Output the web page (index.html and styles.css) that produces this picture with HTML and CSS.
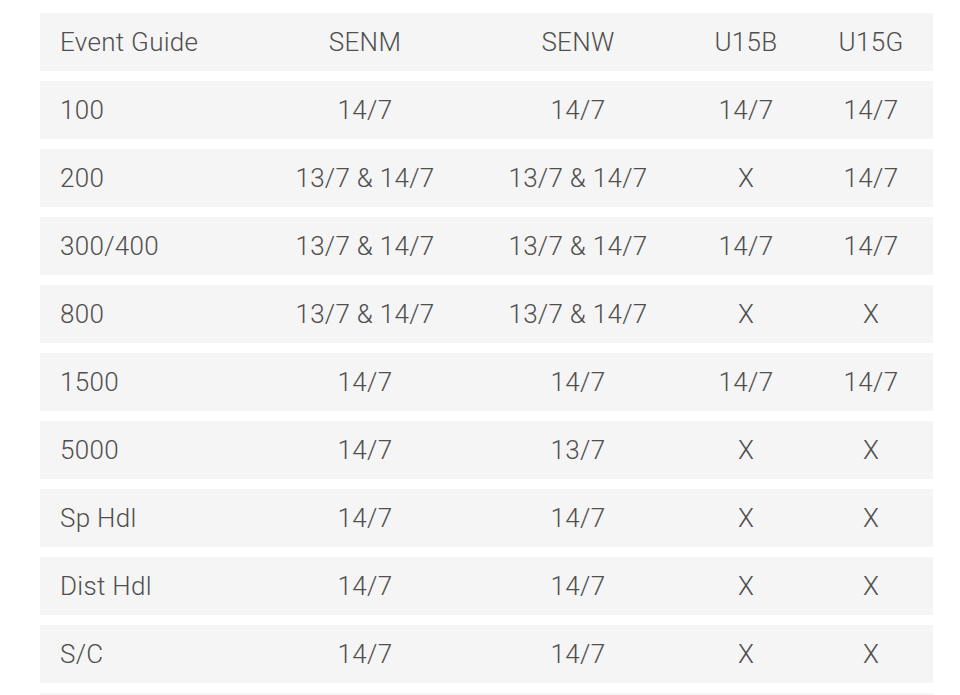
FILE: index.html
```html
<!DOCTYPE html>
<html>
<head>
<meta charset="utf-8">
<link rel="stylesheet" href="styles.css">
</head>
<body>
<div class="table">
  <div class="row"><div class="cell first">Event Guide</div><div class="cell">SENM</div><div class="cell">SENW</div><div class="cell">U15B</div><div class="cell">U15G</div></div>
  <div class="row"><div class="cell first">100</div><div class="cell">14/7</div><div class="cell">14/7</div><div class="cell">14/7</div><div class="cell">14/7</div></div>
  <div class="row"><div class="cell first">200</div><div class="cell">13/7 &amp; 14/7</div><div class="cell">13/7 &amp; 14/7</div><div class="cell">X</div><div class="cell">14/7</div></div>
  <div class="row"><div class="cell first">300/400</div><div class="cell">13/7 &amp; 14/7</div><div class="cell">13/7 &amp; 14/7</div><div class="cell">14/7</div><div class="cell">14/7</div></div>
  <div class="row"><div class="cell first">800</div><div class="cell">13/7 &amp; 14/7</div><div class="cell">13/7 &amp; 14/7</div><div class="cell">X</div><div class="cell">X</div></div>
  <div class="row"><div class="cell first">1500</div><div class="cell">14/7</div><div class="cell">14/7</div><div class="cell">14/7</div><div class="cell">14/7</div></div>
  <div class="row"><div class="cell first">5000</div><div class="cell">14/7</div><div class="cell">13/7</div><div class="cell">X</div><div class="cell">X</div></div>
  <div class="row"><div class="cell first">Sp Hdl</div><div class="cell">14/7</div><div class="cell">14/7</div><div class="cell">X</div><div class="cell">X</div></div>
  <div class="row"><div class="cell first">Dist Hdl</div><div class="cell">14/7</div><div class="cell">14/7</div><div class="cell">X</div><div class="cell">X</div></div>
  <div class="row"><div class="cell first">S/C</div><div class="cell">14/7</div><div class="cell">14/7</div><div class="cell">X</div><div class="cell">X</div></div>
  <div class="row"></div>
</div>
</body>
</html>
```
FILE: styles.css
```css
html, body {
  margin: 0;
  padding: 0;
  background: #ffffff;
  overflow: hidden;
}
body {
  padding: 13px 27px 0 40px;
  font-family: Roboto, "Liberation Sans", sans-serif;
  font-weight: 300;
  color: #4f4f4f;
}
.table {
  display: flex;
  flex-direction: column;
  gap: 10px;
  width: 893px;
}
.row {
  display: grid;
  grid-template-columns: 217px 216px 210px 126px 124px;
  height: 58px;
  background: #f5f5f5;
  align-items: center;
}
.cell {
  font-size: 26px;
  letter-spacing: 0.3px;
  text-align: center;
  line-height: 58px;
}
.cell.first {
  text-align: left;
  padding-left: 20px;
}
```
